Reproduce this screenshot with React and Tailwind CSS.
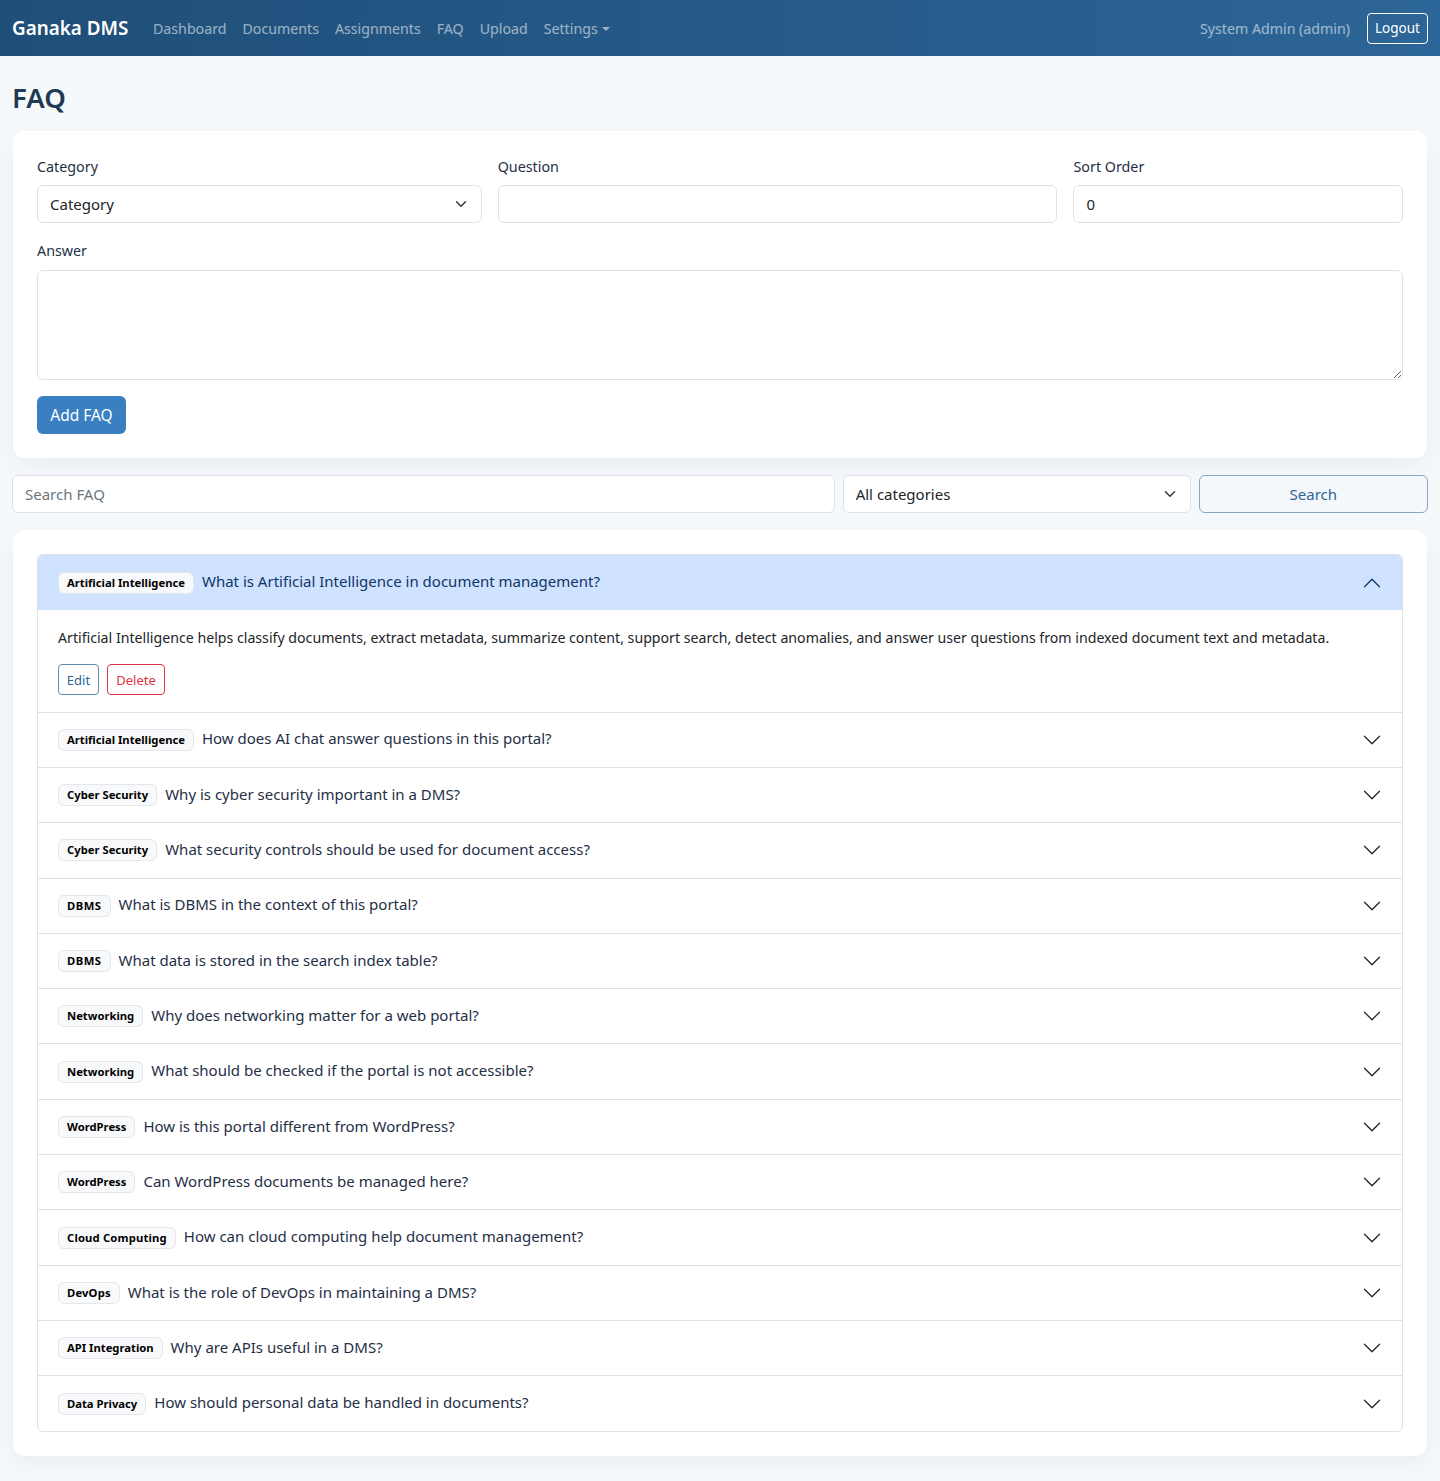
const font = '"Noto Sans", "Open Sans", sans-serif';

const rows = [
  ['Artificial Intelligence', 'How does AI chat answer questions in this portal?'],
  ['Cyber Security', 'Why is cyber security important in a DMS?'],
  ['Cyber Security', 'What security controls should be used for document access?'],
  ['DBMS', 'What is DBMS in the context of this portal?', 'tracking-[0.5px]'],
  ['DBMS', 'What data is stored in the search index table?', 'tracking-[0.5px]'],
  ['Networking', 'Why does networking matter for a web portal?'],
  ['Networking', 'What should be checked if the portal is not accessible?'],
  ['WordPress', 'How is this portal different from WordPress?'],
  ['WordPress', 'Can WordPress documents be managed here?'],
  ['Cloud Computing', 'How can cloud computing help document management?', 'tracking-[0.17px]'],
  ['DevOps', 'What is the role of DevOps in maintaining a DMS?', 'tracking-[0.15px]'],
  ['API Integration', 'Why are APIs useful in a DMS?'],
  ['Data Privacy', 'How should personal data be handled in documents?'],
];

function Chevron({ up, color }) {
  return (
    <svg width="20" height="20" viewBox="0 0 16 16" fill={color} className={up ? 'shrink-0 rotate-180' : 'shrink-0'}>
      <path fillRule="evenodd" d="M1.646 4.646a.5.5 0 0 1 .708 0L8 10.293l5.646-5.647a.5.5 0 0 1 .708.708l-6 6a.5.5 0 0 1-.708 0l-6-6a.5.5 0 0 1 0-.708z" />
    </svg>
  );
}

function Select({ label }) {
  return (
    <div className="relative">
      <select className="h-[38px] w-full appearance-none rounded-md border border-[#dee2e6] bg-white pl-3 pr-9 text-[15px] text-[#212529]">
        <option>{label}</option>
      </select>
      <svg width="16" height="12" viewBox="0 0 16 16" fill="none" stroke="#343a40" strokeWidth="2" strokeLinecap="round" strokeLinejoin="round" className="pointer-events-none absolute right-[13px] top-[13px]">
        <path d="m2 5 6 6 6-6" />
      </svg>
    </div>
  );
}

function Label({ children }) {
  return <label className="mb-2 block h-[22.5px] text-[14.3px] leading-[24px] text-[#1f2f46]">{children}</label>;
}

function Badge({ children, extra }) {
  return (
    <span className={`mr-2 inline-flex h-[22px] items-center rounded-md border border-[#e3e6ea] bg-[#f8f9fa] px-2 pt-px text-[11.25px] font-bold text-black ${extra || ''}`}>
      {children}
    </span>
  );
}

export default function App() {
  return (
    <div className="min-h-[1481px] bg-[#f6f9fc] text-[15px] text-[#212529]" style={{ fontFamily: font }}>
      <nav className="flex h-14 items-center justify-between bg-gradient-to-r from-[#1f4e79] to-[#2c6597] px-3">
        <div className="flex items-center">
          <a className="mr-6 w-[117px] whitespace-nowrap pt-px text-[18.85px] font-semibold text-white">Ganaka DMS</a>
          <div className="flex items-center gap-4 pt-[2px] text-[14.2px] text-white/55">
            <a>Dashboard</a>
            <a>Documents</a>
            <a>Assignments</a>
            <a>FAQ</a>
            <a>Upload</a>
            <a className="flex items-center">
              Settings
              <span className="ml-1 h-0 w-0 border-x-[4.5px] border-t-[4.5px] border-x-transparent border-t-current" />
            </a>
          </div>
        </div>
        <div className="flex items-center">
          <span className="mr-[17px] pt-[2px] text-[14.2px] text-white/55">System Admin (admin)</span>
          <button className="h-[31px] w-[61px] rounded border border-white pt-px text-[13.5px] text-white">Logout</button>
        </div>
      </nav>

      <main className="px-3 pt-6">
        <h1 className="mb-[15.75px] h-[35px] text-[27.5px] font-semibold leading-[36px] text-[#1f3a52]">FAQ</h1>

        <section className="mx-px rounded-xl bg-white p-6 shadow-[0_8px_24px_rgba(15,43,70,0.06)]">
          <div className="grid grid-cols-12 gap-x-4">
            <div className="col-span-4">
              <Label>Category</Label>
              <Select label="Category" />
            </div>
            <div className="col-span-5">
              <Label>Question</Label>
              <input className="h-[38px] w-full rounded-md border border-[#dee2e6] bg-white px-3" />
            </div>
            <div className="col-span-3">
              <Label>Sort Order</Label>
              <input defaultValue="0" className="h-[38px] w-full rounded-md border border-[#dee2e6] bg-white px-3" />
            </div>
          </div>
          <div className="mt-4">
            <Label>Answer</Label>
            <textarea className="block h-[110px] w-full rounded-md border border-[#dee2e6] bg-white px-3 py-1.5" />
          </div>
          <button className="mt-4 block h-[38px] w-[89px] rounded-md bg-[#3a7fc2] pt-[2px] text-[15.5px] text-white">Add FAQ</button>
        </section>

        <div className="mt-[17px] grid grid-cols-12 gap-x-2">
          <input placeholder="Search FAQ" className="col-span-7 h-[38px] w-full rounded-md border border-[#dee2e6] bg-white px-3 placeholder:text-[#6c757d]" />
          <div className="col-span-3">
            <Select label="All categories" />
          </div>
          <button className="col-span-2 h-[38px] rounded-md border border-[#8aa6c1] bg-[#f5f8fb] text-[#2c6597]">Search</button>
        </div>

        <section className="mx-px mt-[17.25px] rounded-xl bg-white p-6 shadow-[0_8px_24px_rgba(15,43,70,0.06)]">
          <div className="overflow-hidden rounded-md border border-[#dee2e6]">
            <div className="flex h-[55.33px] items-center justify-between bg-[#cfe2ff] pl-5 pr-5 text-[#0f3668]">
              <div className="flex items-center">
                <Badge>Artificial Intelligence</Badge>
                <span className="pb-[2px]">What is Artificial Intelligence in document management?</span>
              </div>
              <Chevron up color="#0f3668" />
            </div>
            <div className="h-[101.2px] px-5 pt-4">
              <p className="h-[22.5px] text-[14.17px] leading-[24px]">Artificial Intelligence helps classify documents, extract metadata, summarize content, support search, detect anomalies, and answer user questions from indexed document text and metadata.</p>
              <div className="mt-[15.5px] flex gap-2">
                <button className="h-[31px] w-[41px] rounded border border-[#5f8cb0] pt-[2px] text-[13px] text-[#2c6597]">Edit</button>
                <button className="h-[31px] w-[58px] rounded border border-[#dc3545] pt-[2px] text-[13px] text-[#dc3545]">Delete</button>
              </div>
            </div>
            {rows.map(([cat, q, extra], i) => (
              <div key={i} className="flex h-[55.33px] items-center justify-between border-t border-[#dee2e6] pl-5 pr-5 text-[#1f2f46]">
                <div className="flex items-center">
                  <Badge extra={extra}>{cat}</Badge>
                  <span className="pb-[2px]">{q}</span>
                </div>
                <Chevron color="#212529" />
              </div>
            ))}
          </div>
        </section>
        <div className="h-[25px]" />
      </main>
    </div>
  );
}
